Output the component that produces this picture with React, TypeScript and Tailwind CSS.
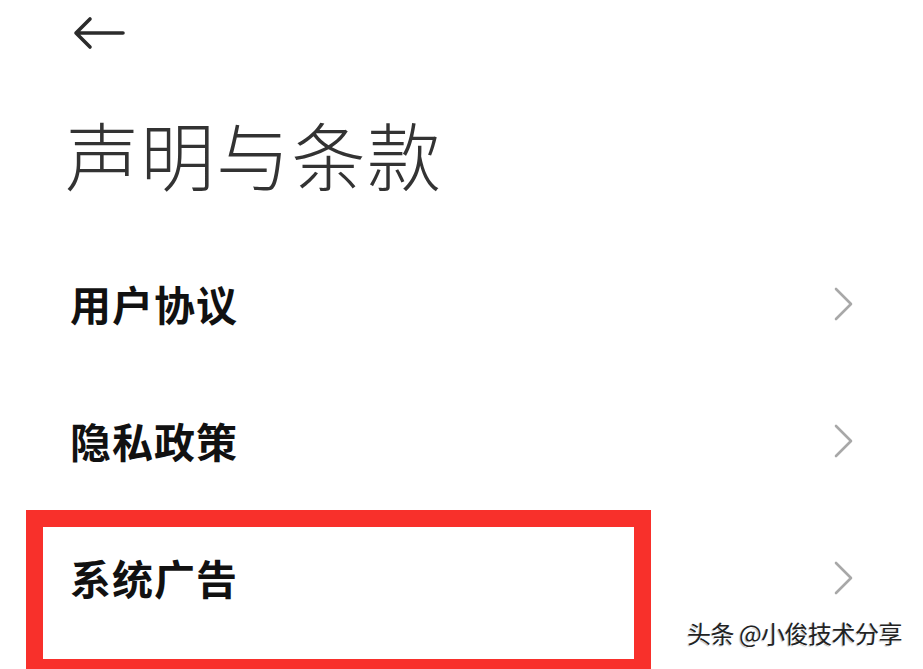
import React from 'react'

const rows = ['用户协议', '隐私政策', '系统广告']

function Chevron() {
  return (
    <svg width="22" height="36" viewBox="0 0 22 36" fill="none" className="shrink-0">
      <path d="M3 3 L18 18 L3 33" stroke="#a8a8a8" strokeWidth="2.6" strokeLinecap="round" strokeLinejoin="round" />
    </svg>
  )
}

export default function App() {
  return (
    <div
      className="relative w-[923px] h-[669px] overflow-hidden bg-white"
      style={{ fontFamily: '"Noto Sans CJK SC", "Noto Sans", sans-serif' }}
    >
      {/* back arrow */}
      <div className="pl-[73px] pt-[16px]">
        <svg width="54" height="34" viewBox="0 0 54 34" fill="none">
          <path d="M3 17 H50 M17 3 L3 17 L17 31" stroke="#2b2b2b" strokeWidth="3.6" strokeLinecap="round" strokeLinejoin="round" />
        </svg>
      </div>

      {/* title */}
      <h1 className="pl-[65px] mt-[66px] text-[74px] leading-none font-light text-[#333] tracking-[1.5px]">
        声明与条款
      </h1>

      {/* list */}
      <div className="mt-[45px]">
        {rows.map((r) => (
          <div key={r} className="flex items-center justify-between h-[137px] pl-[70px] pr-[68px]">
            <span className="text-[41px] font-bold text-[#111] tracking-[1px]">{r}</span>
            <Chevron />
          </div>
        ))}
      </div>

      {/* red annotation box */}
      <div className="absolute left-[26px] top-[510px] w-[625px] h-[166px] border-[17px] border-[#f8302b]" />

      {/* watermark */}
      <div
        className="absolute left-[687px] top-[621px] text-[24px] text-[#222] leading-none tracking-[-0.5px]"
        style={{ textShadow: '1px 1px 0 #fff, -1px 1px 1px #bbb' }}
      >
        头条 @小俊技术分享
      </div>
    </div>
  )
}
